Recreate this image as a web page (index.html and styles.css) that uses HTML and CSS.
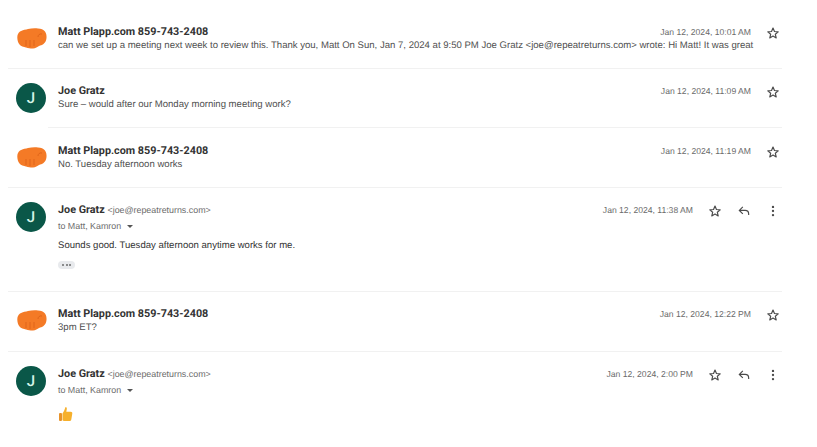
FILE: index.html
```html
<!DOCTYPE html>
<html lang="en">
  <head>
    <meta charset="UTF-8" />
    <title>Email thread</title>
    <link rel="stylesheet" href="styles.css">
  </head>
  <body>
    <svg class="defs" width="0" height="0" aria-hidden="true">
      <symbol id="star" viewBox="0 0 24 24">
        <path d="M12 3.600l2.500 5.900 6.400.5-4.900 4.200 1.500 6.200L12 17.100l-5.500 3.300L8 14.200 3.100 10l6.400-.5z" fill="none" stroke="currentColor" stroke-width="2" stroke-linejoin="round" />
      </symbol>
      <symbol id="reply" viewBox="0 0 24 24">
        <path d="M10 5L4 11l6 6M4 11h10c3.500 0 6 2.500 6 6v2" fill="none" stroke="currentColor" stroke-width="2" />
      </symbol>
      <symbol id="more" viewBox="0 0 24 24">
        <circle cx="12" cy="5" r="2" fill="currentColor" />
        <circle cx="12" cy="12" r="2" fill="currentColor" />
        <circle cx="12" cy="19" r="2" fill="currentColor" />
      </symbol>
      <symbol id="fist" viewBox="0 0 30 21">
        <path d="M3 3.500C6 1.500 9 1.800 11 1c3-.8 7-1 10-.6 3 .3 5.500 1 7 3 1.300 1.700 1.700 4 1.500 6.500-.2 2.500-1.200 4.500-3 6-1.500 1.200-3 1.200-4.500 2.200-1.500 1.200-3.500 2.300-6 2.400-2.500.1-4.500-.4-7-1C6.500 19 4 18.500 2.500 16.500 1 14.500.3 12 .3 9.500.3 7 1 5 3 3.500z" fill="#f47a26" />
        <path d="M9 12v6M13 12v7M17 12v6M25 6c-2.500-.5-4 1-4 3" fill="none" stroke="#e0651a" stroke-width="1" />
      </symbol>
    </svg>

    <main class="thread">
      <!-- message 1 -->
      <article class="msg msg-short">
        <svg class="fist"><use href="#fist" /></svg>
        <div class="msg-body">
          <div class="msg-top">
            <span class="name">Matt Plapp.com 859-743-2408</span>
            <time class="date">Jan 12, 2024, 10:01 AM</time>
          </div>
          <p class="snippet">can we set up a meeting next week to review this. Thank you, Matt On Sun, Jan 7, 2024 at 9:50 PM Joe Gratz &lt;joe@repeatreturns.com&gt; wrote: Hi Matt! It was great</p>
        </div>
        <svg class="icon star"><use href="#star" /></svg>
      </article>

      <!-- message 2 -->
      <article class="msg msg-short msg-inset">
        <div class="avatar">J</div>
        <div class="msg-body">
          <div class="msg-top">
            <span class="name">Joe Gratz</span>
            <time class="date">Jan 12, 2024, 11:09 AM</time>
          </div>
          <p class="snippet">Sure – would after our Monday morning meeting work?</p>
        </div>
        <svg class="icon star"><use href="#star" /></svg>
      </article>

      <!-- message 3 -->
      <article class="msg msg-short">
        <svg class="fist"><use href="#fist" /></svg>
        <div class="msg-body">
          <div class="msg-top">
            <span class="name">Matt Plapp.com 859-743-2408</span>
            <time class="date">Jan 12, 2024, 11:19 AM</time>
          </div>
          <p class="snippet">No. Tuesday afternoon works</p>
        </div>
        <svg class="icon star"><use href="#star" /></svg>
      </article>

      <!-- message 4, open -->
      <article class="msg msg-open">
        <div class="avatar">J</div>
        <div class="msg-body">
          <div class="msg-top">
            <span><span class="name">Joe Gratz</span> <span class="addr">&lt;joe@repeatreturns.com&gt;</span></span>
            <time class="date">Jan 12, 2024, 11:38 AM</time>
          </div>
          <div class="to">to Matt, Kamron <span class="caret"></span></div>
          <p class="text">Sounds good. Tuesday afternoon anytime works for me.</p>
          <div class="dots"><i></i><i></i><i></i></div>
        </div>
        <div class="actions">
          <svg class="icon star"><use href="#star" /></svg>
          <svg class="icon reply"><use href="#reply" /></svg>
          <svg class="icon more"><use href="#more" /></svg>
        </div>
      </article>

      <!-- message 5 -->
      <article class="msg msg-short">
        <svg class="fist"><use href="#fist" /></svg>
        <div class="msg-body">
          <div class="msg-top">
            <span class="name">Matt Plapp.com 859-743-2408</span>
            <time class="date">Jan 12, 2024, 12:22 PM</time>
          </div>
          <p class="snippet">3pm ET?</p>
        </div>
        <svg class="icon star"><use href="#star" /></svg>
      </article>

      <!-- message 6, open -->
      <article class="msg msg-open msg-last">
        <div class="avatar">J</div>
        <div class="msg-body">
          <div class="msg-top">
            <span><span class="name">Joe Gratz</span> <span class="addr">&lt;joe@repeatreturns.com&gt;</span></span>
            <time class="date">Jan 12, 2024, 2:00 PM</time>
          </div>
          <div class="to">to Matt, Kamron <span class="caret"></span></div>
          <div class="emoji">
            <svg viewBox="0 0 16 16" width="16" height="16">
              <path d="M7.500 1c1 0 1.500.8 1.300 2L8.300 5.800h4.500c1 0 1.700.7 1.500 1.700l-1 6c-.2 1-1 1.500-2 1.500H6.500c-1 0-1.500-.4-2-.8V7.500C5.500 6 6.800 3.500 7.500 1z" fill="#f6b02c" />
              <rect x="1" y="7" width="3" height="8" rx="1" fill="#e8932a" />
            </svg>
          </div>
        </div>
        <div class="actions">
          <svg class="icon star"><use href="#star" /></svg>
          <svg class="icon reply"><use href="#reply" /></svg>
          <svg class="icon more"><use href="#more" /></svg>
        </div>
      </article>
    </main>
  </body>
</html>
```

FILE: styles.css
```css
:root {
  --text: #333;
  --muted: #6b6b6b;
  --line: #f1f1f1;
  --green: #0a5748;
}

body {
  margin: 0;
  background-color: white;
  color: var(--text);
  font-family: "Liberation Sans", Arial, sans-serif;
  font-size: 10px;
  text-rendering: geometricPrecision;
  overflow: hidden;
}

.defs {
  position: absolute;
}

.thread {
  width: 774px;
  margin-left: 8px;
}

.msg {
  display: flex;
  align-items: flex-start;
  position: relative;
  border-bottom: 1px solid var(--line);
  box-sizing: border-box;
}

.msg-short {
  height: 59.500px;
  padding-top: 14px;
}

.msg:first-child {
  height: 69px;
  padding-top: 24px;
}

.msg-inset {
  border-bottom: none;
}

.msg-inset::after {
  content: "";
  position: absolute;
  left: 40px;
  right: 0;
  bottom: 1px;
  height: 1px;
  background-color: var(--line);
}

.msg-open {
  height: 104px;
  padding-top: 14px;
}

.msg-last {
  border-bottom: none;
}

.avatar {
  width: 30px;
  height: 30px;
  margin: 0 12px 0 8px;
  flex: none;
  border-radius: 50%;
  background-color: var(--green);
  color: #d5f5e8;
  font-family: Roboto, Arial, sans-serif;
  font-size: 15px;
  font-weight: 500;
  line-height: 30px;
  text-align: center;
}

.fist {
  width: 30px;
  height: 21px;
  margin: 4px 11px 0 9px;
  flex: none;
}

.msg-body {
  flex: 1;
  min-width: 0;
}

.msg-top {
  display: flex;
  justify-content: space-between;
  align-items: baseline;
  line-height: 16px;
}

.name {
  color: var(--text);
  font-family: Roboto, Arial, sans-serif;
  font-size: 10.800px;
  font-weight: 700;
}

.addr {
  color: var(--muted);
  font-size: 8.900px;
}

.to {
  color: var(--muted);
  font-size: 8.900px;
  line-height: 14px;
}

.date {
  margin-right: 3px;
  color: var(--muted);
  font-size: 8.600px;
}

.msg-open .date {
  margin-right: 0;
}

.snippet {
  margin: 0;
  color: #4f4f4f;
  font-size: 9.570px;
  line-height: 12px;
  white-space: nowrap;
}

.caret {
  display: inline-block;
  margin-left: 3px;
  border-top: 3px solid #555;
  border-left: 3px solid transparent;
  border-right: 3px solid transparent;
  vertical-align: middle;
}

.text {
  margin: 5px 0 0;
  font-size: 9.570px;
  line-height: 15px;
}

.dots {
  display: flex;
  justify-content: center;
  align-items: center;
  gap: 1.500px;
  width: 17px;
  height: 8px;
  margin-top: 8px;
  border-radius: 4px;
  background-color: #e8eaed;
}

.dots i {
  width: 2px;
  height: 2px;
  border-radius: 50%;
  background-color: var(--muted);
}

.emoji {
  margin-top: 9px;
  height: 16px;
}

.icon {
  width: 14px;
  height: 14px;
  flex: none;
  color: #4a4a4a;
}

.msg > .star {
  margin: 2px 2px 0 12px;
}

.actions {
  display: flex;
  gap: 15px;
  margin: 2px 2px 0 15px;
}
```
